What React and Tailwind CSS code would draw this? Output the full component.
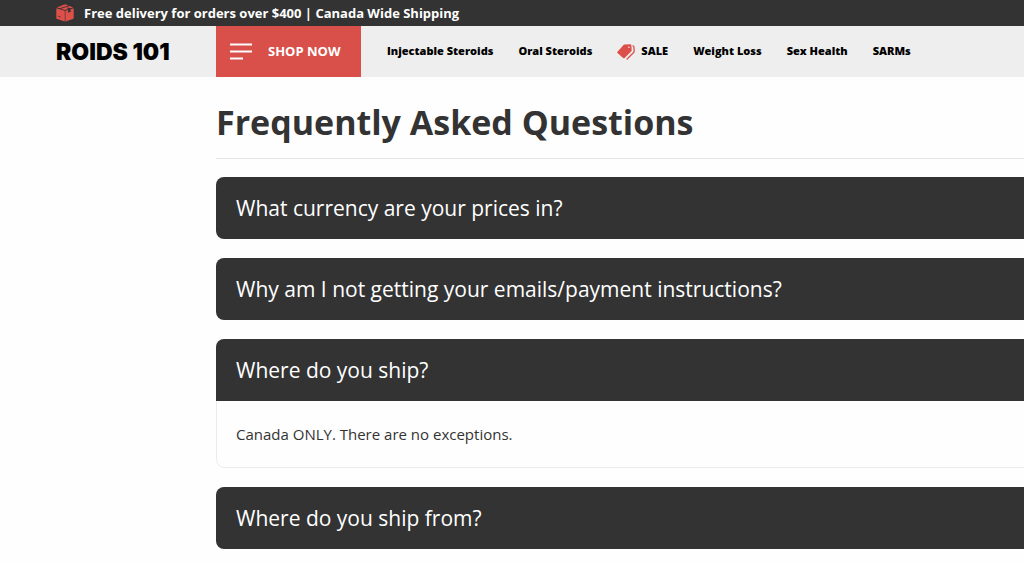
import { useState } from "react";

const links = ["Injectable Steroids", "Oral Steroids", "SALE", "Weight Loss", "Sex Health", "SARMs"];

const questions = [
  { q: "What currency are your prices in?", a: "All prices are in Canadian dollars." },
  { q: "Why am I not getting your emails/payment instructions?", a: "Please check your spam folder." },
  { q: "Where do you ship?", a: "Canada ONLY. There are no exceptions." },
  { q: "Where do you ship from?", a: "We ship from within Canada." },
];

function BoxIcon() {
  return (
    <svg viewBox="0 0 18 18" className="h-[18px] w-[18px] shrink-0" aria-hidden="true">
      <path fill="#dc5049" d="M.3 4.3 8.8 6.8V17.6L1.2 15.1Q.3 14.8.3 14Z" />
      <path fill="#dc5049" d="M9.4 6.8 12.1 6v3l1.2-.9 1.3.2V5.2l3.1-.9V14q0 .8-.9 1.1L9.4 17.6Z" />
      <path fill="#dc5049" d="M.8 3.4 8.2.6Q9 .3 9.8.6l2.6 1-8.6 2.7Z" />
      <path fill="#dc5049" d="m4.9 4.7 8.7-2.7 3.6 1.4-2.7.9-3-.7-.9.4 2 .9L9 6Z" />
      <path stroke="#333" strokeWidth="0.8" d="m2.2 12.2 2.3.8" />
    </svg>
  );
}

function TagsIcon() {
  return (
    <svg viewBox="0 0 18 16" className="h-4 w-[18px] shrink-0" aria-hidden="true">
      <path
        fill="#dc5049"
        fillRule="evenodd"
        d="M7.5.6 13 .3Q14.3.2 14.4 1.5L14.7 6.2Q14.7 7 14.1 7.6L7.6 14Q6.9 14.7 6.1 14L.5 9Q-.1 8.4.5 7.7L6.3 1.2Q6.8.7 7.5.6ZM11.9 2.4a.8.8 0 1 0 0 1.6.8.8 0 0 0 0-1.6Z"
      />
      <path fill="none" stroke="#dc5049" strokeWidth="1.3" strokeLinecap="round" d="M15.9 1.8q.9.1 1 1l.3 4.3q0 .8-.6 1.4L10.1 15" />
    </svg>
  );
}

function FaqItem({ q, a, open, onToggle, id }) {
  return (
    <section className="overflow-hidden rounded-lg">
      <h2>
        <button
          type="button"
          aria-expanded={open}
          aria-controls={id}
          onClick={onToggle}
          className="block w-full cursor-pointer bg-[#333] px-5 py-4 text-left text-[21px] leading-[30px] text-white"
        >
          {q}
        </button>
      </h2>
      <div id={id} hidden={!open} className="rounded-b-lg border border-t-0 border-[#ebebeb] px-[19px] py-[21px] text-[15px] leading-6 text-[#333]">
        {a}
      </div>
    </section>
  );
}

export default function App() {
  const [openIndex, setOpenIndex] = useState(2);
  return (
    <div className="overflow-x-clip bg-[#fefefe] font-['Open_Sans','Noto_Sans',sans-serif] text-[#333]">
      <div className="flex h-[26px] items-center gap-2.5 bg-[#333] pl-14 text-[13px] leading-5 font-bold text-white">
        <BoxIcon />
        <p>Free delivery for orders over $400 | Canada Wide Shipping</p>
      </div>
      <header className="flex h-[51px] items-stretch bg-[#eee]">
        <a href="#home" className="flex w-[216px] shrink-0 items-center pl-14 font-['Inter',sans-serif] text-[23px] leading-6 font-black text-black">
          ROIDS 101
        </a>
        <button type="button" className="flex w-[145px] shrink-0 cursor-pointer items-center gap-4 bg-[#d94f4a] pl-3.5 text-[13px] font-bold text-white">
          <svg viewBox="0 0 22 17" className="h-[17px] w-[22px]" stroke="currentColor" strokeWidth="2" aria-hidden="true">
            <path d="M0 1.5h22M0 8.5h22M0 15.5h13" />
          </svg>
          SHOP NOW
        </button>
        <nav className="flex items-center gap-[25px] pl-[26px] text-[11px] font-extrabold whitespace-nowrap text-black">
          {links.map((label) => (
            <a key={label} href="#shop" className="flex items-center gap-1.5">
              {label === "SALE" && <TagsIcon />}
              {label}
            </a>
          ))}
        </nav>
      </header>
      <main className="pb-4 pl-[216px]">
        <h1 className="border-b border-[#e6e6e6] pt-[21px] pb-3 text-[34px] leading-[48px] font-bold">Frequently Asked Questions</h1>
        <div className="-mr-10 mt-[18px] flex flex-col gap-[19px]">
          {questions.map((item, i) => (
            <FaqItem
              key={item.q}
              id={`answer-${i}`}
              q={item.q}
              a={item.a}
              open={openIndex === i}
              onToggle={() => setOpenIndex(openIndex === i ? -1 : i)}
            />
          ))}
        </div>
      </main>
    </div>
  );
}
